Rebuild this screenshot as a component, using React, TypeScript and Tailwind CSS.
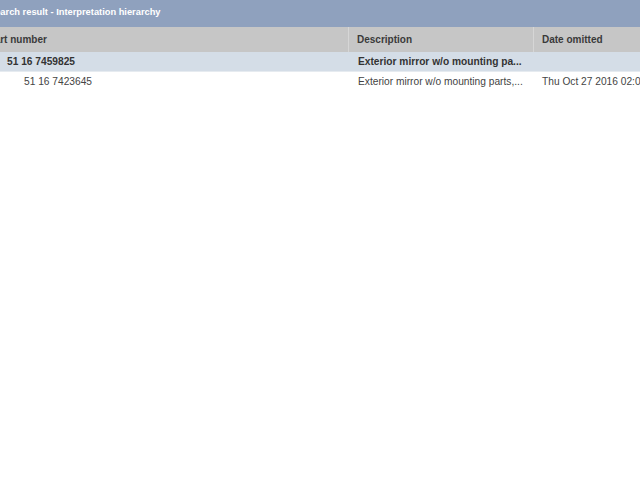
import React from 'react';

const rows = [
  { part: '51 16 7459825', desc: 'Exterior mirror w/o mounting pa...', date: '', level: 0 },
  { part: '51 16 7423645', desc: 'Exterior mirror w/o mounting parts,...', date: 'Thu Oct 27 2016 02:00:00', level: 1 },
];

export default function App() {
  return (
    <div className="w-[640px] h-[480px] overflow-hidden bg-white" style={{ fontFamily: '"Liberation Sans", Arial, sans-serif' }}>
      <div className="-ml-[20px] w-[700px]">
        {/* Title bar */}
        <div className="h-[27px] bg-[#8fa1be] flex items-center pl-[9px] pb-[1px] text-white text-[9.3px] font-bold whitespace-nowrap">
          Search result - Interpretation hierarchy
        </div>

        {/* Column headers */}
        <div className="h-[25px] bg-[#c6c6c6] flex text-[10px] font-bold text-[#3a3a3a] whitespace-nowrap">
          <div className="w-[369px] flex items-center pl-[8px] border-r border-[#d6d6d6]">Part number</div>
          <div className="w-[185px] flex items-center pl-[8px] border-r border-[#d6d6d6]">Description</div>
          <div className="flex-1 flex items-center pl-[8px]">Date omitted</div>
        </div>

        {/* Rows */}
        {rows.map((r, i) => (
          <div
            key={i}
            className={
              r.level === 0
                ? 'h-[20px] bg-[#d4dde7] flex text-[10.2px] font-bold text-[#333] whitespace-nowrap border-b border-[#e6ebf0]'
                : 'h-[20px] bg-white flex text-[10.2px] text-[#444] whitespace-nowrap'
            }
          >
            <div className={r.level === 0 ? 'w-[369px] flex items-center pl-[27px]' : 'w-[369px] flex items-center pl-[44px]'}>{r.part}</div>
            <div className="w-[185px] flex items-center pl-[9px]">{r.desc}</div>
            <div className="flex-1 flex items-center pl-[8px]">{r.date}</div>
          </div>
        ))}
      </div>
    </div>
  );
}
